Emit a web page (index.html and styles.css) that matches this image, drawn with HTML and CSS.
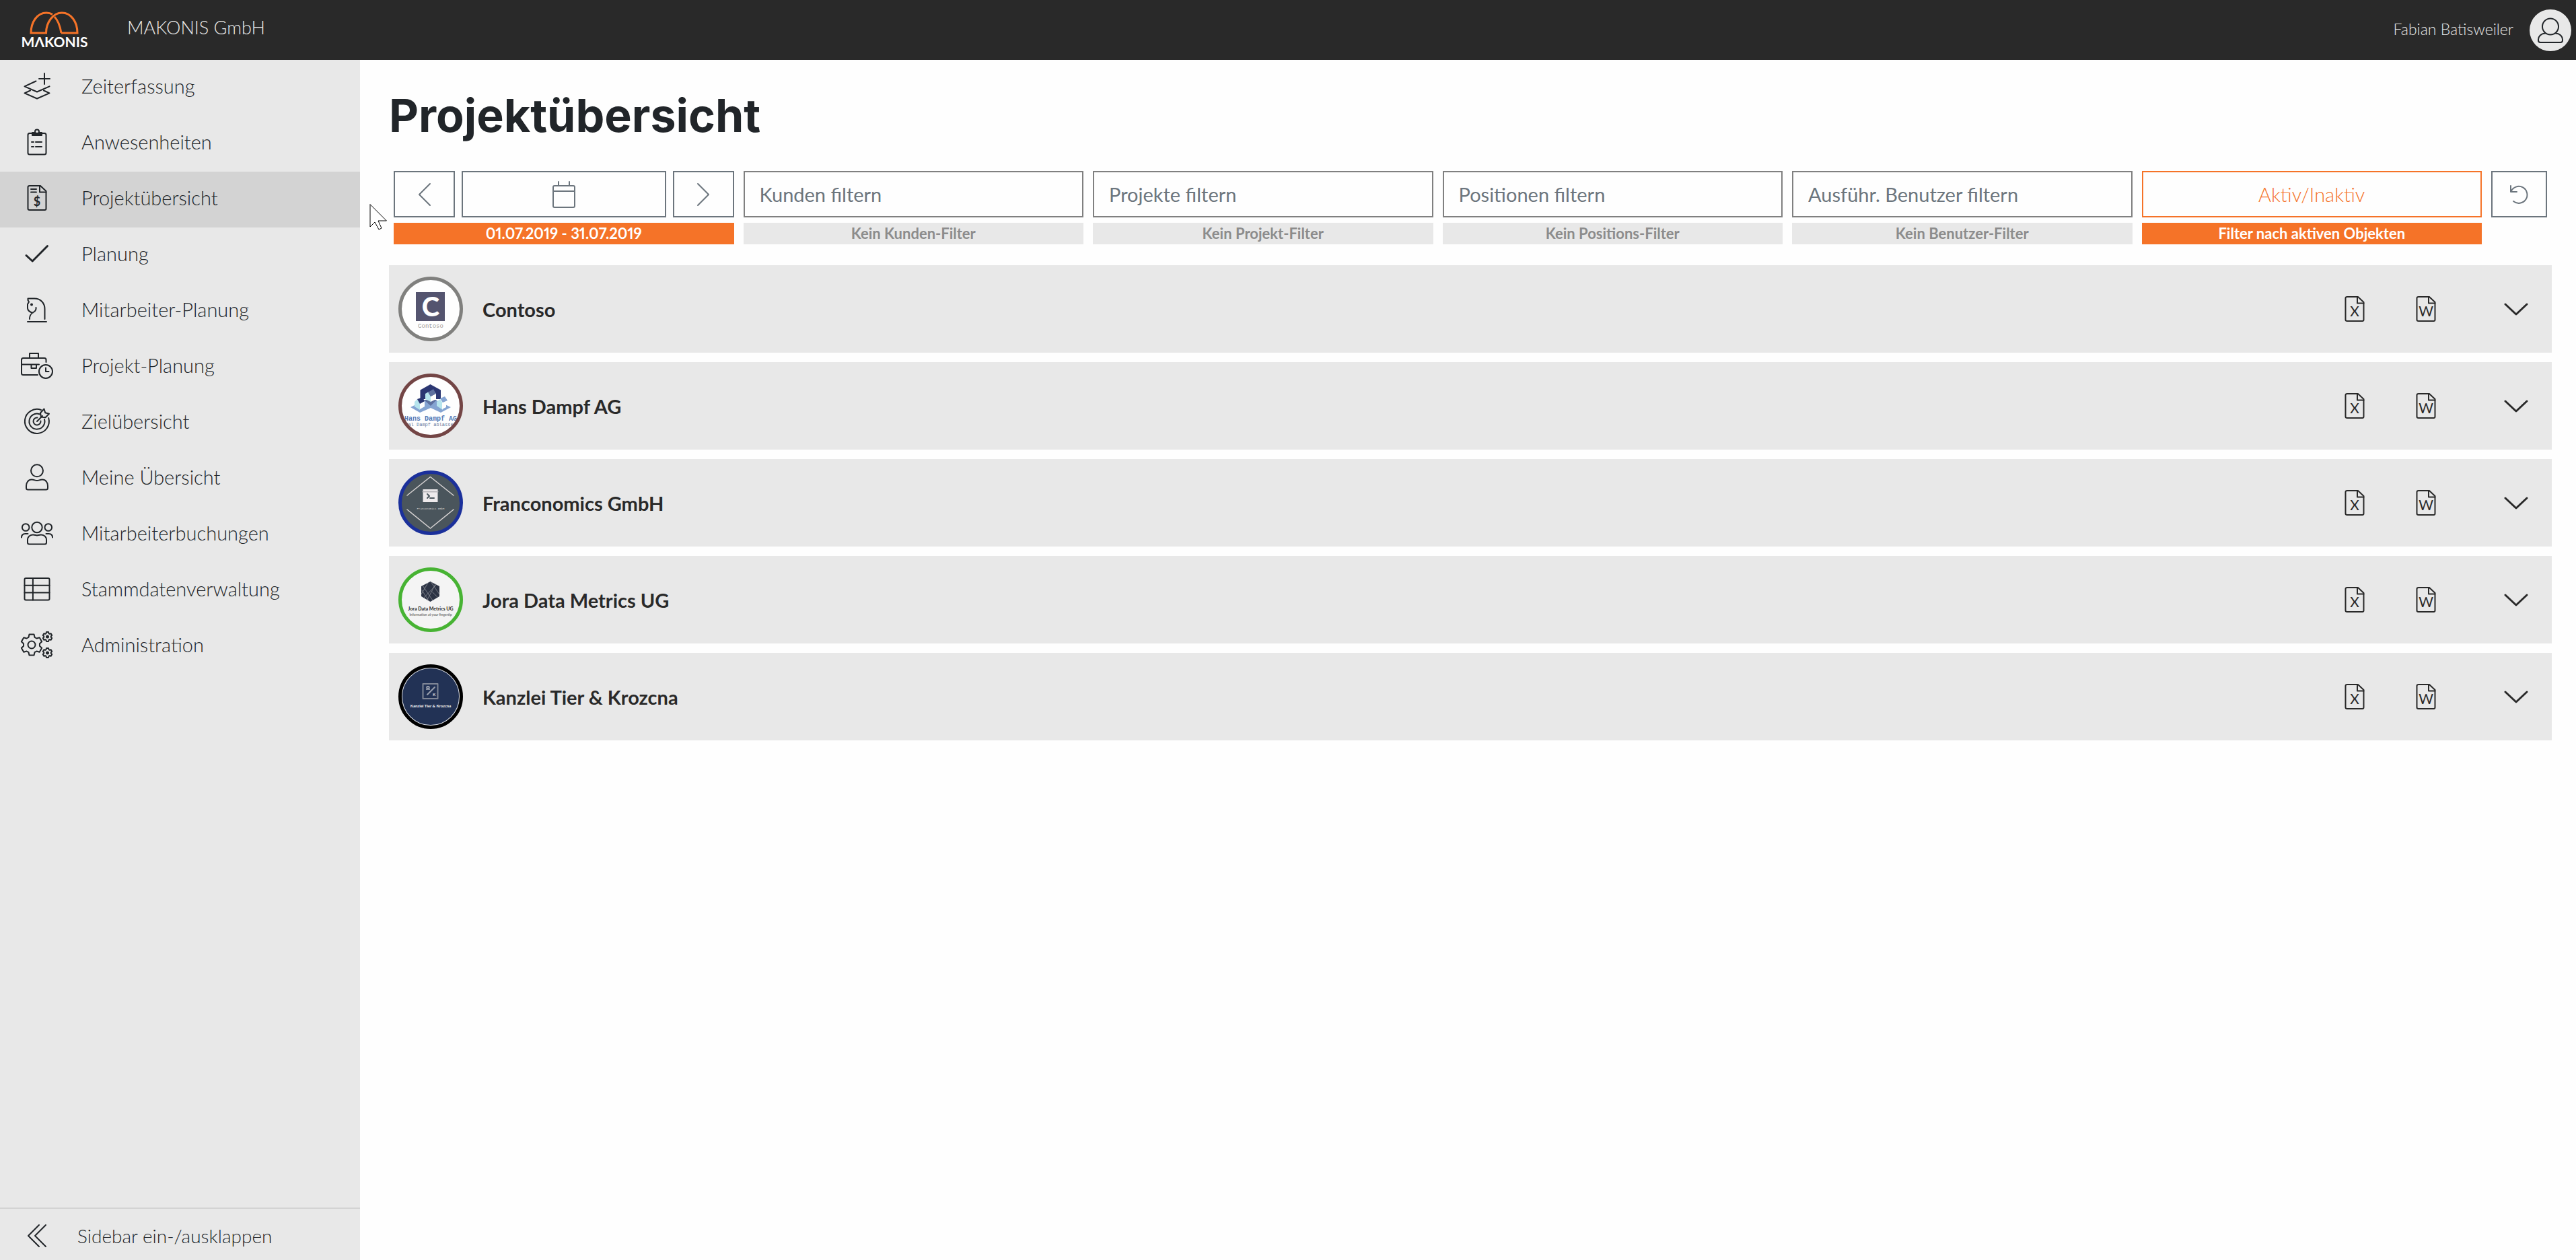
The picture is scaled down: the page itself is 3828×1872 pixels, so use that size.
FILE: index.html
```html
<!DOCTYPE html>
<html lang="de">
<head>
    <meta charset="UTF-8">
    <meta name="viewport" content="width=device-width, initial-scale=1.0">
    <title>Projektübersicht</title>
    <link rel="stylesheet" href="styles.css">
</head>
<body>
    <!-- shared icons -->
    <svg class="sprite" aria-hidden="true">
        <symbol id="file" viewBox="0 0 30 40">
            <path d="M4 2H20L28.500 10V36Q28.500 38 26.500 38H4Q1.500 38 1.500 36V4Q1.500 2 4 2Z"/>
            <path d="M19 2V11.500H28.500"/>
        </symbol>
        <symbol id="chevron" viewBox="0 0 36 20">
            <path d="M2 2L18 17L34 2"/>
        </symbol>
        <symbol id="gear" viewBox="-18 -18 36 36">
            <path vector-effect="non-scaling-stroke" d="M-4.500 -11.200L-3.500 -15.500H3.500L4.500 -11.200L7.450 -9.500L11.670 -10.780L15.170 -4.720L11.950 -1.700V1.700L15.170 4.720L11.670 10.780L7.450 9.500L4.500 11.200L3.500 15.500H-3.500L-4.500 11.200L-7.450 9.500L-11.670 10.780L-15.170 4.720L-11.950 1.700V-1.700L-15.170 -4.720L-11.670 -10.780L-7.450 -9.500Z"/>
        </symbol>
    </svg>

    <header class="topbar">
        <a href="#" class="brand" aria-label="MAKONIS">
            <svg width="102" height="60" viewBox="0 0 102 60">
                <path class="brand-arch" d="M60 34C58 22 54 14 50 10M47 6.500C44 4.500 41 4 38 4C24 4 15 18 15 34H37.500C37.500 18 48 4 61 4C75 4 84 18 84 34H60"/>
                <text class="brand-text" x="50" y="55">MΛKONIS</text>
            </svg>
        </a>
        <span class="company">MAKONIS GmbH</span>
        <a href="#" class="user">
            <span>Fabian Batisweiler</span>
            <svg class="user-pic" width="62" height="62" viewBox="0 0 62 62">
                <circle class="user-bg" cx="31" cy="31" r="31"/>
                <circle cx="31" cy="25.500" r="12"/>
                <path d="M23 35.500C17 36 13 40 13 45V46Q13 49 16 49H46Q49 49 49 46V45C49 40 45 36 39 35.500"/>
            </svg>
        </a>
    </header>

    <div class="layout">
        <aside class="sidebar">
            <nav>
                <ul>
                    <li><a href="#">
                        <svg class="icon" viewBox="0 0 48 40"><path d="M22.500 12.500L5.500 20.300L24 28.500L42.500 20.300M14 26.500L5.500 30.300L24 38.500L42.500 30.300L34 26.500M35 1V17M27 9H43"/></svg>
                        Zeiterfassung</a></li>
                    <li><a href="#">
                        <svg class="icon" viewBox="0 0 48 40"><rect x="10.500" y="7" width="27" height="31.500" rx="2.500"/><circle cx="24" cy="4.500" r="3"/><path class="fill" d="M17 6H21L24 8L27 6H31V10H17Z"/><path d="M16 20H19M16 27H19M22 20H31M22 27H31"/></svg>
                        Anwesenheiten</a></li>
                    <li class="active"><a href="#">
                        <svg class="icon" viewBox="0 0 48 40"><use href="#file" x="9" y="0" width="30" height="40"/><path d="M15 7H23M15 11.500H23"/><text class="icon-text dollar" x="24" y="32">$</text></svg>
                        Projektübersicht</a></li>
                    <li><a href="#">
                        <svg class="icon" viewBox="0 0 48 40"><path class="bold" d="M8 22.500L17.200 31L39.500 8.500"/></svg>
                        Planung</a></li>
                    <li><a href="#">
                        <svg class="icon" viewBox="0 0 48 40"><path d="M10 38H38M13 34C13 28 15 26 18.500 24C22 22 23 20 22.500 17M18 24.500C14 24.500 10 21 10 18V12L12 8.500L10.500 6V3.500H20C30 3.500 35.500 11 35.500 19V34"/><circle class="fill" cx="16" cy="12.500" r="1"/></svg>
                        Mitarbeiter-Planung</a></li>
                    <li><a href="#">
                        <svg class="icon" viewBox="0 0 48 40"><path d="M25 34H3.500Q1 34 1 31.500V11.500Q1 9 3.500 9H35Q37.500 9 37.500 11.500V15M1 18.500H27M13 9V2H26V9M15.500 18.500V24H23V18.500M37 23.500V29H41.500"/><circle cx="37" cy="29" r="10"/></svg>
                        Projekt-Planung</a></li>
                    <li><a href="#">
                        <svg class="icon" viewBox="0 0 48 40"><path d="M30 3A18 18 0 1 0 41.200 15M27.500 9.200A11.500 11.500 0 1 0 35 17M24.500 14.500A5.500 5.500 0 1 0 29.500 19.500M24 20L32 12M30 13.500L29 7.500L34.500 1.500L36.200 7.200L42 8.800L36.500 14.300Z"/></svg>
                        Zielübersicht</a></li>
                    <li><a href="#">
                        <svg class="icon" viewBox="0 0 48 40"><circle cx="24" cy="10.300" r="9"/><path d="M16 23.500C20 23.500 21 25 24 25C27 25 28 23.500 32 23.500C37 23.500 40 28 40 33V36Q40 38.500 37.500 38.500H10.500Q8 38.500 8 36V33C8 28 11 23.500 16 23.500Z"/></svg>
                        Meine Übersicht</a></li>
                    <li><a href="#">
                        <svg class="icon" viewBox="0 0 48 40"><circle cx="24" cy="11.500" r="7.700"/><circle cx="7.200" cy="11.500" r="5.300"/><circle cx="40.800" cy="11.500" r="5.300"/><path d="M18 22.500C21 22.500 22 23.500 24 23.500C26 23.500 27 22.500 30 22.500C35 22.500 38 26 38 30V34Q38 36.500 35.500 36.500H12.500Q10 36.500 10 34V30C10 26 13 22.500 18 22.500ZM1 26.500C1 23 3 21 6.500 21H10.500M47 26.500C47 23 45 21 41.500 21H37.500"/></svg>
                        Mitarbeiterbuchungen</a></li>
                    <li><a href="#">
                        <svg class="icon" viewBox="0 0 48 40"><rect x="5.500" y="4" width="37" height="32.500" rx="2"/><path d="M17.900 4V36.500M5.500 14.700H42.500M5.500 25.500H42.500"/></svg>
                        Stammdatenverwaltung</a></li>
                    <li><a href="#">
                        <svg class="icon" viewBox="0 0 48 40"><use href="#gear" x="-2" y="2" width="36" height="36"/><circle cx="16" cy="20" r="5.500"/><use href="#gear" x="31.500" y="0" width="16" height="16"/><use href="#gear" x="31.500" y="24" width="16" height="16"/><circle class="fill" cx="39.500" cy="8" r="1.500"/><circle class="fill" cx="39.500" cy="32" r="1.500"/></svg>
                        Administration</a></li>
                </ul>
            </nav>
            <button type="button" class="collapse">
                <svg class="icon" viewBox="0 0 48 40"><path d="M27 4L11 20L27 36M37 4L21 20L37 36"/></svg>
                Sidebar ein-/ausklappen
            </button>
        </aside>

        <main>
            <h1>Projektübersicht</h1>

            <form class="filters">
                <div class="filter">
                    <div class="date-buttons">
                        <button type="button" aria-label="Zurück"><svg width="20" height="36" viewBox="0 0 20 36"><path d="M18 2L2 18L18 34"/></svg></button>
                        <button type="button" class="calendar" aria-label="Zeitraum wählen"><svg width="36" height="40" viewBox="0 0 36 40"><rect x="2" y="7" width="32" height="32" rx="2"/><path d="M2 15H34M10 1V7M26 1V7"/></svg></button>
                        <button type="button" aria-label="Weiter"><svg width="20" height="36" viewBox="0 0 20 36"><path d="M2 2L18 18L2 34"/></svg></button>
                    </div>
                    <div class="state on">01.07.2019 - 31.07.2019</div>
                </div>
                <div class="filter">
                    <input type="text" placeholder="Kunden filtern" aria-label="Kunden filtern">
                    <div class="state">Kein Kunden-Filter</div>
                </div>
                <div class="filter">
                    <input type="text" placeholder="Projekte filtern" aria-label="Projekte filtern">
                    <div class="state">Kein Projekt-Filter</div>
                </div>
                <div class="filter">
                    <input type="text" placeholder="Positionen filtern" aria-label="Positionen filtern">
                    <div class="state">Kein Positions-Filter</div>
                </div>
                <div class="filter">
                    <input type="text" placeholder="Ausführ. Benutzer filtern" aria-label="Ausführende Benutzer filtern">
                    <div class="state">Kein Benutzer-Filter</div>
                </div>
                <div class="filter">
                    <button type="button" class="toggle">Aktiv/Inaktiv</button>
                    <div class="state on">Filter nach aktiven Objekten</div>
                </div>
                <div class="filter">
                    <button type="reset" aria-label="Zurücksetzen"><svg width="32" height="32" viewBox="0 0 32 32"><path d="M3 3V12H12M3.500 11.500A12.500 12.500 0 1 1 7 26"/></svg></button>
                </div>
            </form>

            <ul class="customers">
                <li>
                    <svg class="logo" viewBox="0 0 96 96">
                        <circle cx="48" cy="48" r="45.500" fill="#fefefe" stroke="#80807e" stroke-width="5"/>
                        <rect x="26" y="23" width="43" height="43" fill="#54546f"/>
                        <text x="48" y="59" font-size="40" font-weight="900" fill="#fff">C</text>
                        <text class="mono" x="48" y="76" font-size="9" fill="#999">Contoso</text>
                    </svg>
                    <h2>Contoso</h2>
                    <button type="button" aria-label="Excel-Export"><svg width="30" height="40" viewBox="0 0 30 40"><use href="#file"/><text class="icon-text" x="15" y="31">X</text></svg></button>
                    <button type="button" aria-label="Word-Export"><svg width="30" height="40" viewBox="0 0 30 40"><use href="#file"/><text class="icon-text" x="15" y="31">W</text></svg></button>
                    <button type="button" class="expand" aria-label="Aufklappen"><svg width="36" height="20"><use href="#chevron"/></svg></button>
                </li>
                <li>
                    <svg class="logo" viewBox="0 0 96 96">
                        <clipPath id="inner"><circle cx="48" cy="48" r="43"/></clipPath>
                        <circle cx="48" cy="48" r="45.500" fill="#fefefe" stroke="#734545" stroke-width="5"/>
                        <path d="M47.500 16L63 24.500V38H32.500V24.500Z" fill="#2b3672"/>
                        <path d="M18 50L32 43L48 36L63 43L78 50L63 58L48 51L32 58Z" fill="#85a4d2"/>
                        <path d="M38 39L57 39L48 48Z" fill="#5e709f"/>
                        <path d="M40 30L45 27L48 34V42L40 38Z" fill="#b6e4ed"/>
                        <path d="M48 34L56 29V38L48 42Z" fill="#fefefe"/>
                        <path d="M44 28L52 23L56 30L48 34Z" fill="#5e709f"/>
                        <path d="M24 42L28 38L32 44V54L24 49Z" fill="#b6e4ed"/>
                        <path d="M32 44L39 41V49L32 53Z" fill="#fefefe"/>
                        <path d="M28 38L36 35L39 41L32 45Z" fill="#2b3672"/>
                        <path d="M57 42L62 38L66 44V54L57 48Z" fill="#b6e4ed"/>
                        <path d="M65 44L71 41V50L65 53Z" fill="#fefefe"/>
                        <path d="M62 37L69 34L73 40L66 43Z" fill="#85a4d2"/>
                        <g clip-path="url(#inner)">
                            <text class="mono" x="48" y="70" font-size="10" font-weight="700" fill="#5278b4">Hans Dampf AG</text>
                            <text class="mono" x="48" y="78" font-size="7" fill="#66799c">Mal Dampf ablassen</text>
                        </g>
                    </svg>
                    <h2>Hans Dampf AG</h2>
                    <button type="button" aria-label="Excel-Export"><svg width="30" height="40" viewBox="0 0 30 40"><use href="#file"/><text class="icon-text" x="15" y="31">X</text></svg></button>
                    <button type="button" aria-label="Word-Export"><svg width="30" height="40" viewBox="0 0 30 40"><use href="#file"/><text class="icon-text" x="15" y="31">W</text></svg></button>
                    <button type="button" class="expand" aria-label="Aufklappen"><svg width="36" height="20"><use href="#chevron"/></svg></button>
                </li>
                <li>
                    <svg class="logo" viewBox="0 0 96 96">
                        <circle cx="48" cy="48" r="45.500" fill="#4a555c" stroke="#1b309b" stroke-width="5"/>
                        <path d="M13 37L47.500 9.500L82 37M13 58L47.500 86L82 58" fill="none" stroke="#d8d4d4" stroke-width="1.500"/>
                        <rect x="36.500" y="28" width="22" height="19" fill="#eeeaec"/>
                        <path d="M36.500 31.500H58.500" stroke="#b9b7bb"/>
                        <path d="M43 35L46 38L43 41M47 41H53" fill="none" stroke="#4a555c"/>
                        <text class="mono" x="48" y="58" font-size="4" fill="#d0d0d0">Franconomics GmbH</text>
                    </svg>
                    <h2>Franconomics GmbH</h2>
                    <button type="button" aria-label="Excel-Export"><svg width="30" height="40" viewBox="0 0 30 40"><use href="#file"/><text class="icon-text" x="15" y="31">X</text></svg></button>
                    <button type="button" aria-label="Word-Export"><svg width="30" height="40" viewBox="0 0 30 40"><use href="#file"/><text class="icon-text" x="15" y="31">W</text></svg></button>
                    <button type="button" class="expand" aria-label="Aufklappen"><svg width="36" height="20"><use href="#chevron"/></svg></button>
                </li>
                <li>
                    <svg class="logo" viewBox="0 0 96 96">
                        <circle cx="48" cy="48" r="45.500" fill="#f4f4f4" stroke="#47b333" stroke-width="5"/>
                        <path d="M47.500 21L61 28V43L47.500 51L34 43V28Z" fill="#2c3344"/>
                        <path d="M36 27L51 49M34 40L44 23M48 21L61 40M43 48L55 25M56 26L38 45M35 34L44 48M50 36L58 44" fill="none" stroke="#999ca3" stroke-width=".7"/>
                        <text x="48" y="64" font-size="7" font-weight="900" fill="#333">Jora Data Metrics UG</text>
                        <text x="48" y="72" font-size="5" font-weight="700" fill="#777">Information at your fingertip</text>
                    </svg>
                    <h2>Jora Data Metrics UG</h2>
                    <button type="button" aria-label="Excel-Export"><svg width="30" height="40" viewBox="0 0 30 40"><use href="#file"/><text class="icon-text" x="15" y="31">X</text></svg></button>
                    <button type="button" aria-label="Word-Export"><svg width="30" height="40" viewBox="0 0 30 40"><use href="#file"/><text class="icon-text" x="15" y="31">W</text></svg></button>
                    <button type="button" class="expand" aria-label="Aufklappen"><svg width="36" height="20"><use href="#chevron"/></svg></button>
                </li>
                <li>
                    <svg class="logo" viewBox="0 0 96 96">
                        <circle cx="48" cy="48" r="43" fill="#223255" stroke="#dcdfe6"/>
                        <circle cx="48" cy="48" r="45.500" fill="none" stroke="#000" stroke-width="5"/>
                        <rect x="36.500" y="29" width="22" height="22" fill="none" stroke="#7f8696"/>
                        <path d="M43 45L54 34M42 37H43V36Q41 33 44 33Q47 33 45 36V37H46" fill="none" stroke="#9aa0ae"/>
                        <text x="53" y="47" font-size="6" font-weight="900" fill="#ddd">K</text>
                        <text x="48" y="64" font-size="6" font-weight="900" fill="#eee">Kanzlei Tier &amp; Krozcna</text>
                    </svg>
                    <h2>Kanzlei Tier &amp; Krozcna</h2>
                    <button type="button" aria-label="Excel-Export"><svg width="30" height="40" viewBox="0 0 30 40"><use href="#file"/><text class="icon-text" x="15" y="31">X</text></svg></button>
                    <button type="button" aria-label="Word-Export"><svg width="30" height="40" viewBox="0 0 30 40"><use href="#file"/><text class="icon-text" x="15" y="31">W</text></svg></button>
                    <button type="button" class="expand" aria-label="Aufklappen"><svg width="36" height="20"><use href="#chevron"/></svg></button>
                </li>
            </ul>
        </main>
    </div>

    <svg class="pointer" width="27" height="40" viewBox="0 0 27 40" aria-hidden="true">
        <path d="M1 1V34L8 27L14 38L18 36L13 25H25Z"/>
    </svg>
</body>
</html>
```
FILE: styles.css
```css
* {
    box-sizing: border-box;
}
body {
    display: flex;
    flex-direction: column;
    margin: 0;
    min-height: 100vh;
    background: #fefefe;
    color: #212529;
    font-family: Lato, sans-serif;
    font-size: 29px;
}
ul {
    list-style-type: none;
    margin: 0;
    padding: 0;
}
a {
    color: inherit;
    text-decoration: none;
}
button, input {
    font: inherit;
    border-radius: 0;
}
button {
    cursor: pointer;
}
svg {
    display: block;
    fill: none;
    stroke: currentColor;
    stroke-width: 2;
    stroke-linecap: round;
    stroke-linejoin: round;
}
svg text {
    stroke: none;
    text-anchor: middle;
}
.sprite {
    position: absolute;
    width: 0;
    height: 0;
}

/* top bar */
.topbar {
    display: flex;
    align-items: center;
    height: 89px;
    padding: 0 7px 0 31px;
    background: #292929;
    color: #e8e8e8;
}
.brand-arch {
    stroke: #f57328;
    stroke-width: 3;
    stroke-linecap: butt;
    stroke-linejoin: miter;
}
.brand-text {
    fill: #fff;
    font-size: 21px;
    font-weight: 700;
}
.company {
    margin-left: 56px;
    padding-bottom: 8px;
    font-size: 27px;
    font-weight: 300;
}
.user {
    display: flex;
    align-items: center;
    gap: 24px;
    margin-left: auto;
    font-size: 23px;
    font-weight: 300;
}
.user span {
    padding-bottom: 4px;
}
.user-pic {
    color: #212529;
}
.user-bg {
    fill: #e8e8e8;
    stroke: none;
}

/* sidebar */
.layout {
    display: flex;
    flex: 1;
}
.sidebar {
    display: flex;
    flex-direction: column;
    justify-content: space-between;
    width: 535px;
    background: #e8e8e8;
    font-weight: 300;
}
.sidebar a, .collapse {
    display: flex;
    align-items: center;
    width: 100%;
    padding: 0 31px;
}
.sidebar a {
    gap: 42px;
    height: 83px;
    padding-bottom: 6px;
}
.active {
    background: #d3d3d3;
}
.icon {
    width: 48px;
    height: 40px;
    overflow: visible;
}
.bold {
    stroke-width: 3;
}
.fill {
    fill: currentColor;
}
.icon-text {
    fill: currentColor;
    font-size: 21px;
}
.dollar {
    font-size: 18px;
    font-weight: 700;
}
.collapse {
    gap: 36px;
    height: 78px;
    padding-top: 4px;
    border: 0;
    border-top: 2px solid #d3d3d3;
    background: none;
    color: inherit;
    font-size: 28px;
}

/* content */
main {
    flex: 1;
    padding: 38px 36px 38px 43px;
}
h1 {
    margin: 0 0 39px;
    font-family: Inter, sans-serif;
    font-size: 68px;
    line-height: 88px;
    font-weight: 700;
}
.filters {
    display: grid;
    grid-template-columns: repeat(6, 1fr) 83px;
    gap: 14px;
    padding: 0 7px;
}
.filter button, .filter input {
    display: flex;
    align-items: center;
    justify-content: center;
    width: 100%;
    height: 69px;
    border: 2px solid #6c757d;
    background: none;
    color: #6c757d;
}
.filter input {
    padding: 0 22px;
    border-color: #808080;
}
.filter input::placeholder {
    color: #6c757d;
    opacity: 1;
}
.date-buttons {
    display: grid;
    grid-template-columns: 91px 1fr 91px;
    gap: 10px;
}
.filter .toggle {
    border-color: #f57328;
    color: #f57328;
    font-weight: 300;
}
.state {
    margin-top: 8px;
    background: #e8e8e8;
    color: #8c8c8c;
    font-size: 22px;
    line-height: 32px;
    font-weight: 700;
    font-variant-numeric: proportional-nums;
    text-align: center;
}
.state.on {
    background: #f57328;
    color: #fff;
}

/* customer rows */
.customers {
    display: flex;
    flex-direction: column;
    gap: 14px;
    margin-top: 31px;
}
.customers li {
    display: flex;
    align-items: center;
    height: 130px;
    padding: 0 13px 0 14px;
    background: #e8e8e8;
    color: #292929;
}
.logo {
    width: 96px;
    height: 96px;
    stroke: none;
}
.mono {
    font-family: "Liberation Mono", monospace;
}
.customers h2 {
    margin: 0 auto 0 29px;
    font-size: 29px;
    font-weight: 700;
}
.customers button {
    width: 106px;
    padding: 0 38px;
    border: 0;
    background: none;
    color: inherit;
}
.customers .expand {
    width: 80px;
    margin-left: 41px;
    padding: 2px 22px 0;
}
.expand svg {
    stroke-width: 3;
}

.pointer {
    position: absolute;
    left: 549px;
    top: 303px;
    fill: #fff;
    stroke: #000;
    stroke-width: 1;
}
```
